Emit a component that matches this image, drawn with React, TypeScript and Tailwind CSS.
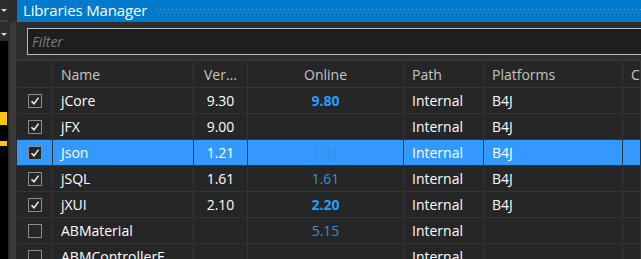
import React from 'react';

type Lib = {
  name: string;
  checked: boolean;
  version: string;
  online: string;
  onlineBold?: boolean;
  path: string;
  platforms: string;
  selected?: boolean;
};

const libs: Lib[] = [
  { name: 'jCore', checked: true, version: '9.30', online: '9.80', onlineBold: true, path: 'Internal', platforms: 'B4J' },
  { name: 'jFX', checked: true, version: '9.00', online: '', path: 'Internal', platforms: 'B4J' },
  { name: 'Json', checked: true, version: '1.21', online: '1.21', path: 'Internal', platforms: 'B4J', selected: true },
  { name: 'jSQL', checked: true, version: '1.61', online: '1.61', path: 'Internal', platforms: 'B4J' },
  { name: 'jXUI', checked: true, version: '2.10', online: '2.20', onlineBold: true, path: 'Internal', platforms: 'B4J' },
  { name: 'ABMaterial', checked: false, version: '', online: '5.15', path: 'Internal', platforms: '' },
  { name: 'ABMControllerF…', checked: false, version: '', online: '', path: 'Internal', platforms: '' },
];

const cols = 'grid grid-cols-[36px_141px_54px_156px_80px_139px_1fr]';
const cell = 'border-r border-b border-[#343434] flex items-center overflow-hidden whitespace-nowrap';

function Arrow() {
  return (
    <svg width="6" height="3" viewBox="0 0 6 3" className="block">
      <path d="M0 0H6L3 3Z" fill="#d4d4d4" />
    </svg>
  );
}

function LeftStrip() {
  return (
    <div className="flex w-[17px] h-full shrink-0">
      <div className="flex flex-col w-[8px] h-full">
        <div className="h-[20px] bg-[#2d2d30] flex items-center pl-[1px] pt-[1px]">
          <Arrow />
        </div>
        <div className="h-[2px] bg-[#3f3f46]" />
        <div className="h-[19px] bg-[#2d2d30] flex items-end pb-[5px] pl-[1px]">
          <Arrow />
        </div>
        <div className="flex-1 bg-black flex flex-col">
          <div className="h-[71px]" />
          <div className="h-[13px] w-[7px] bg-[#f9c41a]" />
          <div className="h-[16px]" />
          <div className="h-[5px] w-[7px] bg-[#f9c41a]" />
        </div>
      </div>
      <div className="flex flex-col w-[9px] h-full bg-[#2b2b2d]">
        <div className="h-[22px]" />
        <div className="flex-1 ml-[2px] w-[6px] bg-[#3a3a3d]" />
      </div>
    </div>
  );
}

function TitleBar() {
  return (
    <div className="h-[22px] bg-[#007acc] flex items-center shrink-0">
      <span className="pl-[6px] pb-[1px] text-[15px] tracking-[-0.15px] text-white leading-none whitespace-nowrap">
        Libraries Manager
      </span>
      <svg className="ml-[9px] flex-1 h-[5px]" height="5">
        <defs>
          <pattern id="dots" width="4" height="6" patternUnits="userSpaceOnUse">
            <rect x="0" y="0" width="1" height="1" fill="#55a6e4" />
            <rect x="2" y="3" width="1" height="1" fill="#55a6e4" />
          </pattern>
        </defs>
        <rect x="0" y="0" width="100%" height="5" fill="url(#dots)" />
      </svg>
    </div>
  );
}

function CheckBox({ checked }: { checked: boolean }) {
  return (
    <div className="w-[14px] h-[14px] border border-[#8c8c8c] bg-[#262626] flex items-center justify-center">
      {checked && (
        <svg width="10" height="10" viewBox="0 0 10 10">
          <path d="M1.5 5.2 L4 7.8 L8.6 1.6" fill="none" stroke="#f0f0f0" strokeWidth="1.5" />
        </svg>
      )}
    </div>
  );
}

function Row({ lib }: { lib: Lib }) {
  const bg = lib.selected ? 'bg-[#3399ff]' : 'bg-[#262626]';
  const onlineColor = lib.onlineBold ? 'font-bold text-[#2e9bff]' : 'text-[#3a8fd9]';
  return (
    <div className={`${cols} h-[26px] ${bg} text-[14px] text-white`}>
      <div className={`${cell} justify-center`}>
        <CheckBox checked={lib.checked} />
      </div>
      <div className={`${cell} pl-[8px]`}>{lib.name}</div>
      <div className={`${cell} justify-center`}>{lib.version}</div>
      <div className={`${cell} justify-center ${onlineColor}`}>{lib.online}</div>
      <div className={`${cell} pl-[8px]`}>{lib.path}</div>
      <div className={`${cell} pl-[8px]`}>{lib.platforms}</div>
      <div className={`${cell}`} />
    </div>
  );
}

export default function App() {
  return (
    <div className="flex w-[641px] h-[259px] overflow-hidden bg-[#2d2d30] font-['Open_Sans',sans-serif]">
      <LeftStrip />
      <div className="flex-1 min-w-0 flex flex-col">
        <TitleBar />
        <div className="pl-[10px] pt-[6px] pb-[5px] shrink-0">
          <div className="w-[640px] h-[27px] border border-[#bcbcbc] bg-[#1e1e1e] flex items-center pl-[4px]">
            <span className="italic text-[14px] text-[#7c7c7c]">Filter</span>
          </div>
        </div>
        <div className="border-t border-[#3a3a3a]">
          <div className={`${cols} h-[27px] bg-[#262626] text-[14px] text-[#c4c4c4]`}>
            <div className={cell} />
            <div className={`${cell} pl-[8px]`}>Name</div>
            <div className={`${cell} justify-center`}>Ver...</div>
            <div className={`${cell} justify-center`}>Online</div>
            <div className={`${cell} pl-[8px]`}>Path</div>
            <div className={`${cell} pl-[8px]`}>Platforms</div>
            <div className={`${cell} pl-[8px]`}>Comment</div>
          </div>
          {libs.map((l) => (
            <Row key={l.name} lib={l} />
          ))}
        </div>
      </div>
    </div>
  );
}
